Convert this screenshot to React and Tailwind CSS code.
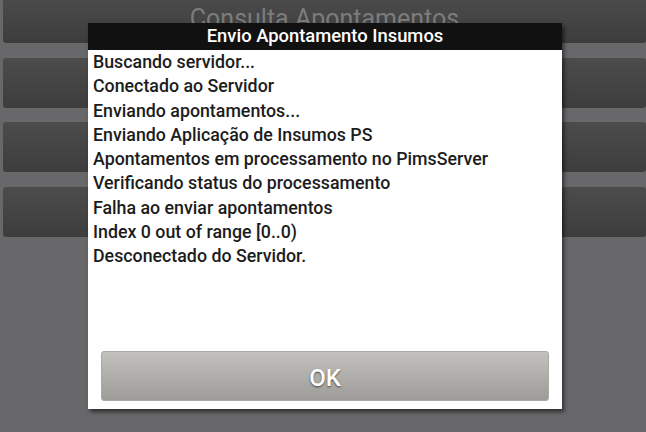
import React from "react";

const lines = [
  "Buscando servidor...",
  "Conectado ao Servidor",
  "Enviando apontamentos...",
  "Enviando Aplicação de Insumos PS",
  "Apontamentos em processamento no PimsServer",
  "Verificando status do processamento",
  "Falha ao enviar apontamentos",
  "Index 0 out of range [0..0)",
  "Desconectado do Servidor.",
];

const BgButton = ({ className, children }) => (
  <div
    className={`ml-[3px] flex items-center justify-center rounded-[3px] bg-gradient-to-b from-[#4c4c4c] to-[#3d3d3d] ${className}`}
  >
    {children}
  </div>
);

const App = () => {
  return (
    <div
      className="relative h-[432px] w-[646px] overflow-hidden bg-[#68686a]"
      style={{ fontFamily: "Roboto, 'Noto Sans', sans-serif" }}
    >
      {/* menu behind the dialog */}
      <div className="flex flex-col">
        <BgButton className="mt-[-7px] h-[50px]">
          <span className="mt-[2px] text-[25px] text-[#7c7c7c]">Consulta Apontamentos</span>
        </BgButton>
        <BgButton className="mt-[15px] h-[50px]" />
        <BgButton className="mt-[14px] h-[50px]" />
        <BgButton className="mt-[15px] h-[50px]" />
      </div>

      {/* dialog */}
      <div className="absolute left-[88px] top-[23px] flex h-[386px] w-[474px] flex-col bg-white shadow-[2px_3px_4px_rgba(0,0,0,0.55)]">
        <div className="flex h-[27px] items-center justify-center bg-[#111112] text-[18.4px] font-medium leading-none text-white">
          Envio Apontamento Insumos
        </div>
        <div className="flex flex-1 flex-col px-[5px] text-[17.8px] font-medium leading-[24.3px] text-[#1c1c1c]">
          {lines.map((l, i) => (
            <div key={i}>{l}</div>
          ))}
        </div>
        <div className="px-[13px] pb-[8px]">
          <button className="flex h-[50px] w-full items-center justify-center rounded-[3px] border border-[#a9a8a4] bg-gradient-to-b from-[#c2c1bd] to-[#9d9c98] pt-[4px] text-[24px] font-medium text-white [text-shadow:0_1px_2px_rgba(0,0,0,0.6)]">
            OK
          </button>
        </div>
      </div>
    </div>
  );
};

export default App;
